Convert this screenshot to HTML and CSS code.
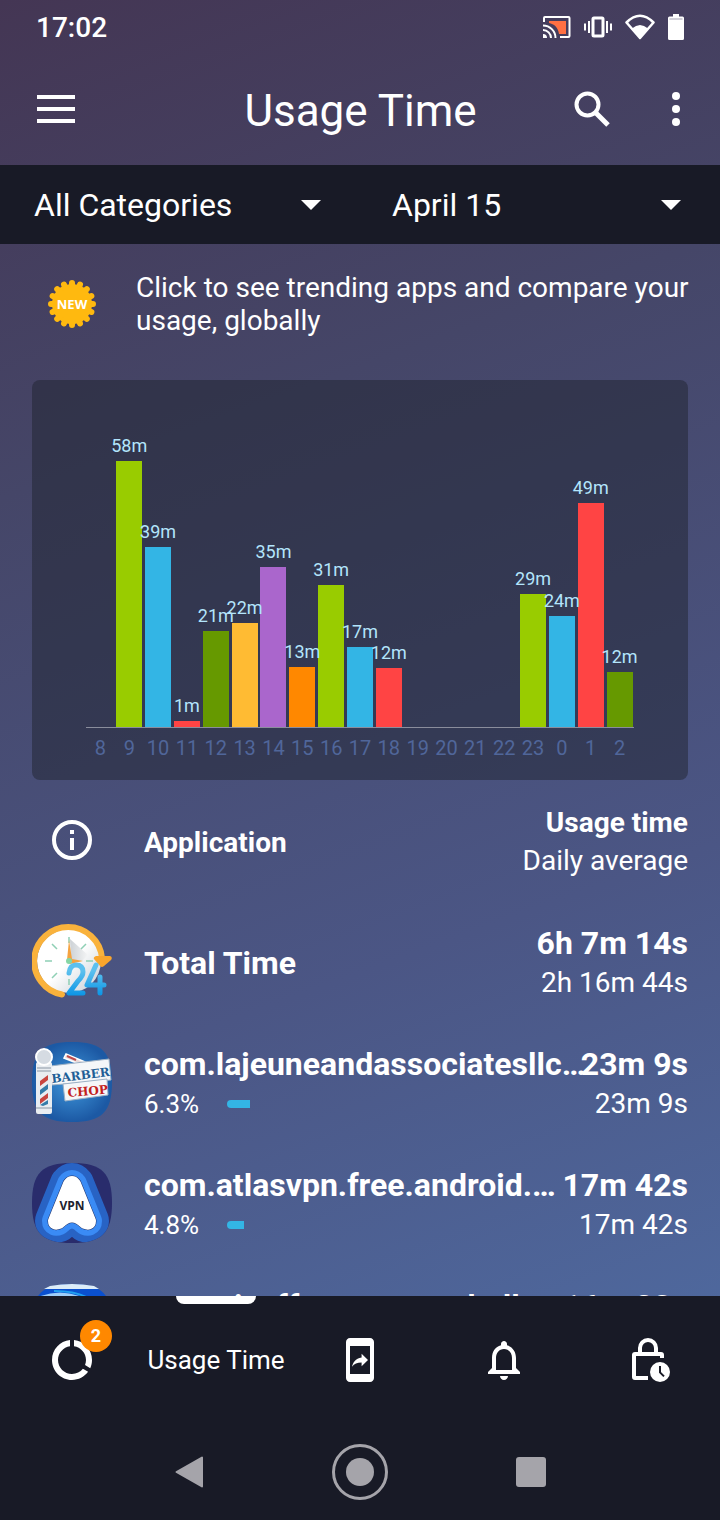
FILE: index.html
```html
<!DOCTYPE html>
<html lang="en">
<head>
    <meta charset="UTF-8">
    <meta name="viewport" content="width=device-width, initial-scale=1.0">
    <title>Usage Time</title>
    <link rel="stylesheet" href="styles.css">
</head>
<body>
    <div class="status-bar">
        <span class="clock">17:02</span>
        <div class="status-icons">
            <svg width="28" height="24" viewBox="0 0 28 24">
                <path d="M6 6h17v13h-7C15 12 11 9 6 8z" fill="#ff7043"/>
                <path d="M1 7V3q0-1 1-1h23.500q1 0 1 1v18q0 1-1 1H17" fill="none" stroke="#fff" stroke-width="2"/>
                <path d="M0 10.500a12.500 12.500 0 0 1 12.500 12.500M0 15a8 8 0 0 1 8 8" fill="none" stroke="#fff" stroke-width="2"/>
                <path d="M0 19a4 4 0 0 1 4 4H0z" fill="#fff"/>
            </svg>
            <svg width="28" height="24" viewBox="0 0 28 24">
                <rect x="9" y="3" width="10" height="18" rx="1" fill="none" stroke="#fff" stroke-width="3"/>
                <path d="M5 6v12M1 8.500v7M23 6v12M27 8.500v7" stroke="#fff" stroke-width="2"/>
            </svg>
            <svg width="30" height="26" viewBox="0 0 30 26">
                <path d="M1.500 8.500Q15-5 28.500 8.500L15 24z" fill="none" stroke="#fff" stroke-width="2.500" stroke-linejoin="round"/>
                <path d="M7 14.500Q15 7.500 23 14.500L15 24z" fill="#fff"/>
            </svg>
            <svg width="16" height="26" viewBox="0 0 16 26">
                <path d="M5 0h6v2.500h3.500q1.500 0 1.500 1.500v20.500q0 1.500-1.500 1.500h-13Q0 26 0 24.500V4q0-1.500 1.500-1.500H5z" fill="#fff"/>
                <path d="M1.500 5h13" stroke="#454060" stroke-width="0.500"/>
            </svg>
        </div>
    </div>

    <header>
        <button class="icon-btn" aria-label="Menu">
            <svg width="38" height="28" viewBox="0 0 38 28"><path d="M0 2h38M0 14h38M0 26h38" stroke="#fff" stroke-width="4"/></svg>
        </button>
        <h1>Usage Time</h1>
        <button class="icon-btn" aria-label="Search">
            <svg width="36" height="36" viewBox="0 0 36 36" fill="none" stroke="#fff"><circle cx="13.500" cy="13.500" r="11" stroke-width="4"/><path d="M22 22l12 12" stroke-width="5"/></svg>
        </button>
        <button class="icon-btn more" aria-label="More options">
            <svg width="8" height="34" viewBox="0 0 8 34" fill="#fff"><circle cx="4" cy="4" r="4"/><circle cx="4" cy="17" r="4"/><circle cx="4" cy="30" r="4"/></svg>
        </button>
    </header>

    <div class="filters">
        <div class="filter">
            <select aria-label="Category">
                <option>All Categories</option>
            </select>
        </div>
        <div class="filter">
            <select aria-label="Date">
                <option>April 15</option>
            </select>
        </div>
    </div>

    <main>
        <a href="#trending" class="promo">
            <svg class="new-badge" width="48" height="48" viewBox="-24 -24 48 48">
                <circle r="20" fill="#ffb90f"/>
                <g stroke="#ffb90f" stroke-width="6" stroke-linecap="round">
                    <path d="M-21 0H21M0-21V21M-14.800-14.800L14.800 14.800M-14.800 14.800L14.800-14.800M-19.400-8L19.400 8M-19.400 8L19.400-8M-8-19.400L8 19.400M8-19.400L-8 19.400"/>
                </g>
                <text x="0" y="5" text-anchor="middle" class="new-text">NEW</text>
            </svg>
            <span>Click to see trending apps and compare your usage, globally</span>
        </a>

        <section class="chart">
            <div class="bars" id="bars"></div>
            <div class="hours" id="hours"></div>
        </section>

        <div class="row list-head">
            <div class="row-icon">
                <svg width="40" height="40" viewBox="0 0 20 20"><circle cx="10" cy="10" r="9" fill="none" stroke="#fff" stroke-width="2"/><path d="M9 5h2v2H9zM9 9h2v6H9z" fill="#fff"/></svg>
            </div>
            <div class="row-body">
                <b class="name">Application</b>
            </div>
            <div class="totals"><b>Usage time</b><span>Daily average</span></div>
        </div>

        <div class="row">
            <div class="row-icon">
                <svg width="80" height="80" viewBox="0 0 80 80">
                    <defs>
                        <linearGradient id="face" x1="0" y1="0" x2="1" y2="1"><stop offset="0.500" stop-color="#fff"/><stop offset="1" stop-color="#c3cbd3"/></linearGradient>
                        <linearGradient id="shade" x1="0" y1="0" x2="1" y2="0"><stop offset="0" stop-color="#cdd2d6"/><stop offset="1" stop-color="#f4f5f6"/></linearGradient>
                        <linearGradient id="blue" x1="0" y1="50" x2="0" y2="74" gradientUnits="userSpaceOnUse"><stop offset="0" stop-color="#5cc0ee"/><stop offset="1" stop-color="#0d96e6"/></linearGradient>
                    </defs>
                    <circle cx="37" cy="40" r="32" fill="url(#face)"/>
                    <path d="M38 18L56 34 50 40 39 41z" fill="url(#shade)"/>
                    <path d="M30 73.500A34 34 0 1 1 70 37" fill="none" stroke="#f9b23c" stroke-width="6" stroke-linecap="round"/>
                    <path d="M64 35h14q3 1 1 4l-7 6q-2 2-4 0l-6-7q-1-2 2-3z" fill="#f9a52c"/>
                    <path d="M37 16v6M13 40h7M54 40h7M20 23l5 5M54 23l-5 5M20 57l5-5M37 58v6" stroke="#8fd0b5" stroke-width="1.500"/>
                    <path d="M35 39l2-20 3 19 11 2-13 3z" fill="#f5a340"/>
                    <circle cx="37" cy="40" r="3" fill="#86d6a5"/>
                    <g fill="none" stroke="url(#blue)" stroke-width="5" stroke-linecap="round" stroke-linejoin="round">
                        <path d="M37 52q1-8 7-8 7 0 7 7 0 4-5 9l-9 12h14"/>
                        <path d="M64 44L55 64h17M68 56v16"/>
                    </g>
                </svg>
            </div>
            <div class="row-body">
                <b class="name">Total Time</b>
            </div>
            <div class="totals"><b>6h 7m 14s</b><span>2h 16m 44s</span></div>
        </div>

        <div class="row">
            <div class="row-icon">
                <svg width="80" height="80" viewBox="0 0 80 80">
                    <defs><radialGradient id="barber"><stop offset="0" stop-color="#4099dd"/><stop offset="1" stop-color="#1c59a4"/></radialGradient></defs>
                    <path d="M40 0C70 0 80 10 80 40S70 80 40 80 0 70 0 40 10 0 40 0z" fill="url(#barber)"/>
                    <path d="M34 12l19 8-1 4-20-8z" fill="#e8d9d8" stroke="#fff" stroke-width="1.500"/>
                    <path d="M35 14l9 4" stroke="#bf4a4a" stroke-width="2"/>
                    <path d="M18 24L77 17 79 38 20 43z" fill="#f5f7f9" stroke="#9db1c5"/>
                    <path d="M31 42L75 37 76 53 33 59z" fill="#f5f7f9" stroke="#9db1c5"/>
                    <text class="sign sign-blue" x="20" y="41" transform="rotate(-7 20 41)">BARBER</text>
                    <text class="sign sign-red" x="36" y="55" transform="rotate(-5 36 55)">CHOP</text>
                    <rect x="4" y="20" width="16" height="52" rx="2" fill="#e9edf1"/>
                    <circle cx="12" cy="15" r="8" fill="#d5dbe2" stroke="#fff" stroke-width="2"/>
                    <path d="M8 39l8-6v5l-8 6zM8 57l8-6v5l-8 6z" fill="#c8453f"/>
                    <path d="M8 48l8-6v5l-8 6zM8 63l8-5v4l-5 2z" fill="#347ca9"/>
                    <path d="M5 26h14M5 29h14M4 66h16" stroke="#aab4bf" stroke-width="1.500"/>
                </svg>
            </div>
            <div class="row-body">
                <b class="name">com.lajeuneandassociatesllc.barberchop</b>
                <div class="share"><span>6.3%</span><div class="track"><div class="fill" style="width: 6.3%"></div></div></div>
            </div>
            <div class="totals"><b>23m 9s</b><span>23m 9s</span></div>
        </div>

        <div class="row">
            <div class="row-icon">
                <svg width="80" height="80" viewBox="0 0 80 80">
                    <clipPath id="squircle"><path d="M40 0C70 0 80 10 80 40S70 80 40 80 0 70 0 40 10 0 40 0z"/></clipPath>
                    <g clip-path="url(#squircle)" stroke-linejoin="round">
                        <rect width="80" height="80" fill="#292c6c"/>
                        <path d="M37 21q3-4 6 0L58 58q0 4-5 2-13-13-26 0-5 2-5-2z" fill="#2863c4" stroke="#2863c4" stroke-width="38"/>
                        <path d="M37 21q3-4 6 0L58 58q0 4-5 2-13-13-26 0-5 2-5-2z" stroke="#3a8bf5" stroke-width="24"/>
                        <path d="M37 21q3-4 6 0L58 58q0 4-5 2-13-13-26 0-5 2-5-2z" fill="#fff" stroke="#20336c" stroke-width="13"/>
                        <path d="M37 21q3-4 6 0L58 58q0 4-5 2-13-13-26 0-5 2-5-2z" fill="#fff" stroke="#fff" stroke-width="12"/>
                        <text x="40" y="47" text-anchor="middle" class="vpn">VPN</text>
                    </g>
                </svg>
            </div>
            <div class="row-body">
                <b class="name">com.atlasvpn.free.android.proxy.secure</b>
                <div class="share"><span>4.8%</span><div class="track"><div class="fill" style="width: 4.8%"></div></div></div>
            </div>
            <div class="totals"><b>17m 42s</b><span>17m 42s</span></div>
        </div>

        <div class="row">
            <div class="row-icon">
                <svg width="80" height="80" viewBox="0 0 80 80">
                    <path d="M40 0C70 0 80 10 80 40S70 80 40 80 0 70 0 40 10 0 40 0z" fill="#0a50cf"/>
                    <path d="M18 2Q40-2 62 2L67 5H12z" fill="#dcecf8"/>
                    <path d="M6 13Q28 4 50 13z" fill="#9ecdf8"/>
                    <path d="M22 7Q44 7 56 14" fill="none" stroke="#20a0f0" stroke-width="2"/>
                </svg>
            </div>
            <div class="row-body">
                <b class="name">com.gixoff.racegamesball.extreme</b>
                <div class="share"><span>4.4%</span><div class="track"><div class="fill" style="width: 4.4%"></div></div></div>
            </div>
            <div class="totals"><b>16m 23s</b><span>16m 23s</span></div>
        </div>
    </main>

    <nav class="tabs">
        <a href="#overview" aria-label="Overview">
            <span class="tab-icon">
                <svg width="48" height="48" viewBox="0 0 24 24" fill="#fff"><path d="M13 2.050v3.030c3.390.490 6 3.390 6 6.920 0 .900-.180 1.750-.480 2.540l2.600 1.530c.560-1.240.880-2.620.880-4.070 0-5.180-3.950-9.450-9-9.950zM12 19c-3.870 0-7-3.130-7-7 0-3.530 2.610-6.430 6-6.920V2.050c-5.060.500-9 4.760-9 9.950 0 5.520 4.470 10 9.990 10 3.310 0 6.240-1.610 8.060-4.090l-2.600-1.530C16.170 17.980 14.210 19 12 19z"/></svg>
                <span class="badge">2</span>
            </span>
        </a>
        <a href="#usage" class="active">Usage Time</a>
        <a href="#share" aria-label="Share">
            <svg width="48" height="48" viewBox="0 0 24 24" fill="#fff"><path d="M17 1H7c-1.100 0-2 .900-2 2v18c0 1.100.900 2 2 2h10c1.100 0 2-.900 2-2V3c0-1.100-.900-2-2-2zm0 18H7V5h10v14z"/><path d="M12.800 13.240V15.100L16 12l-3.200-3.100v1.800c-3.100.430-4.350 2.560-4.800 4.690 1.110-1.500 2.580-2.150 4.800-2.150z"/></svg>
        </a>
        <a href="#alerts" aria-label="Alerts">
            <svg width="48" height="48" viewBox="0 0 24 24" fill="#fff"><path d="M12 22c1.100 0 2-.900 2-2h-4c0 1.100.900 2 2 2zm6-6v-5c0-3.070-1.630-5.640-4.500-6.320V4c0-.830-.670-1.500-1.500-1.500s-1.500.670-1.500 1.500v.680C7.640 5.360 6 7.920 6 11v5l-2 2v1h16v-1l-2-2zm-2 1H8v-6c0-2.480 1.510-4.500 4-4.500s4 2.020 4 4.500v6z"/></svg>
        </a>
        <a href="#limits" aria-label="App limits">
            <svg width="48" height="48" viewBox="0 0 24 24" fill="none" stroke="#fff" stroke-width="2"><path d="M19 11V9.500Q19 9 18.500 9h-13Q5 9 5 9.500v11q0 .500.500.500H12M8 8V6a4 4 0 0 1 8 0v2"/><circle cx="18" cy="18" r="5" fill="#fff" stroke="none"/><path d="M18 15v3.200l2 2" stroke="#181a26" stroke-width="1"/></svg>
        </a>
    </nav>

    <div class="system-nav">
        <button aria-label="Back"><svg width="30" height="32" viewBox="0 0 30 32"><path d="M28 1.500v29L2.500 16z" fill="#a5a4aa" stroke="#a5a4aa" stroke-width="2" stroke-linejoin="round"/></svg></button>
        <button aria-label="Home"><svg width="56" height="56" viewBox="0 0 56 56"><circle cx="28" cy="28" r="26.500" fill="none" stroke="#a5a4aa" stroke-width="3"/><circle cx="28" cy="28" r="14" fill="#a5a4aa"/></svg></button>
        <button aria-label="Recent apps"><svg width="30" height="30" viewBox="0 0 30 30"><rect width="30" height="30" rx="3" fill="#a5a4aa"/></svg></button>
    </div>

    <script>
        // minutes of use in each hour
        const usage = [
            { hour: 8, min: 0 },
            { hour: 9, min: 58.4, color: '#99cc00' },
            { hour: 10, min: 39.6, color: '#33b5e5' },
            { hour: 11, min: 1.3, color: '#ff4444' },
            { hour: 12, min: 21.2, color: '#669900' },
            { hour: 13, min: 22.9, color: '#ffbb33' },
            { hour: 14, min: 35.2, color: '#aa66cc' },
            { hour: 15, min: 13.2, color: '#ff8800' },
            { hour: 16, min: 31.2, color: '#99cc00' },
            { hour: 17, min: 17.6, color: '#33b5e5' },
            { hour: 18, min: 12.9, color: '#ff4444' },
            { hour: 19, min: 0 },
            { hour: 20, min: 0 },
            { hour: 21, min: 0 },
            { hour: 22, min: 0 },
            { hour: 23, min: 29.3, color: '#99cc00' },
            { hour: 0, min: 24.3, color: '#33b5e5' },
            { hour: 1, min: 49.3, color: '#ff4444' },
            { hour: 2, min: 12.2, color: '#669900' }
        ];

        const bars = document.getElementById('bars');
        const hours = document.getElementById('hours');

        usage.forEach(item => {
            const slot = document.createElement('div');
            slot.className = 'slot';
            if (item.min > 0) {
                slot.innerHTML = `<span class="value">${Math.floor(item.min)}m</span>
                    <div class="bar" style="height: ${item.min / 60 * 100}%; background: ${item.color}"></div>`;
            }
            bars.appendChild(slot);

            const label = document.createElement('span');
            label.textContent = item.hour;
            hours.appendChild(label);
        });
    </script>
</body>
</html>
```
FILE: styles.css
```css
* {
    box-sizing: border-box;
}

body {
    font-family: Roboto, "Liberation Sans", sans-serif;
    margin: 0;
    height: 100vh;
    display: flex;
    flex-direction: column;
    overflow: hidden;
    color: #fff;
    background: linear-gradient(160deg, #443654 0%, #454668 28%, #4b5685 62%, #5070a8 100%);
}

svg {
    display: block;
    flex-shrink: 0;
}

button {
    border: none;
    background: none;
    padding: 0;
    cursor: pointer;
}

a {
    color: #fff;
    text-decoration: none;
}

/* Top of the screen */
.status-bar {
    height: 52px;
    padding: 2px 36px 0;
    display: flex;
    justify-content: space-between;
    align-items: center;
}

.clock {
    font-size: 28px;
    font-weight: 500;
}

.status-icons {
    display: flex;
    align-items: center;
    gap: 13px;
}

header {
    height: 113px;
    padding: 0 40px 0 37px;
    display: flex;
    align-items: center;
}

h1 {
    flex: 1;
    margin: 0;
    padding: 4px 0 0 72px;
    text-align: center;
    font-size: 44px;
    font-weight: 400;
}

.more {
    margin-left: 62px;
}

.filters {
    display: grid;
    grid-template-columns: 1fr 1fr;
    height: 79px;
    background: #181a26;
}

.filter {
    position: relative;
    padding: 0 40px 0 32px;
    display: flex;
}

.filter:first-child {
    padding-left: 34px;
}

.filter::after {
    content: "";
    position: absolute;
    right: 39px;
    top: 35px;
    border: 10px solid transparent;
    border-top-color: #fff;
    border-bottom: none;
    pointer-events: none;
}

select {
    appearance: none;
    flex: 1;
    border: none;
    padding: 0;
    background: none;
    color: #fff;
    font-family: inherit;
    font-size: 32px;
}

/* Content */
main {
    flex: 1;
    min-height: 0;
    overflow: hidden;
}

.promo {
    display: flex;
    align-items: center;
    gap: 40px;
    height: 136px;
    padding: 0 28px 16px 48px;
    font-size: 28px;
    line-height: 33px;
}

.new-text {
    font: 700 13px "Open Sans", sans-serif;
    fill: #fff;
}

.chart {
    margin: 0 32px;
    padding: 74px 54px 20px;
    border-radius: 8px;
    background: rgba(32, 36, 48, 0.5);
}

.bars {
    display: grid;
    grid-template-columns: repeat(19, 1fr);
    height: 274px;
    border-bottom: 1px solid #8a8d9c;
}

.slot {
    display: flex;
    flex-direction: column;
    justify-content: flex-end;
    align-items: center;
    min-width: 0;
    height: 100%;
}

.bar {
    width: 26px;
    flex-shrink: 0;
}

.value {
    position: relative;
    z-index: 1;
    margin-bottom: 4px;
    font-size: 18px;
    line-height: 22px;
    color: #b3e5fc;
}

.hours {
    display: grid;
    grid-template-columns: repeat(19, 1fr);
    margin-top: 8px;
    font-size: 20px;
    line-height: 24px;
    text-align: center;
    color: #50669a;
}

.row {
    display: flex;
    align-items: center;
    height: 121px;
    padding: 0 32px;
}

.row-icon {
    display: flex;
    justify-content: center;
    width: 80px;
    margin-right: 32px;
    flex-shrink: 0;
}

.row-body {
    flex: 1;
    min-width: 0;
    margin-right: -6px;
    padding-top: 5px;
}

.name {
    display: block;
    overflow: hidden;
    text-overflow: ellipsis;
    white-space: nowrap;
}

.row b {
    font-size: 32px;
    line-height: 40px;
}

.share {
    display: flex;
    align-items: center;
    gap: 28px;
    font-size: 26px;
    line-height: 40px;
}

.track {
    flex: 1;
}

.fill {
    height: 8px;
    border-radius: 4px 0 0 4px;
    background: #33b5e5;
}

.totals {
    padding-top: 5px;
    text-align: right;
    white-space: nowrap;
}

.totals b,
.totals span {
    display: block;
}

.totals span {
    font-size: 28px;
    line-height: 40px;
}

.list-head {
    height: 120px;
}

.list-head b {
    font-size: 28px;
    line-height: 36px;
}

.sign {
    font-family: "DejaVu Serif", serif;
    font-weight: 700;
}

.sign-blue {
    font-size: 12px;
    fill: #1f5f96;
}

.sign-red {
    font-size: 12px;
    fill: #c2211c;
}

.vpn {
    font: 700 12px "Open Sans", sans-serif;
    fill: #20222e;
}

/* Bottom navigation */
.tabs {
    display: grid;
    grid-template-columns: repeat(5, 1fr);
    height: 128px;
    background: #181a26;
}

.tabs a {
    position: relative;
    display: flex;
    justify-content: center;
    align-items: center;
    font-size: 26px;
}

.active::before {
    content: "";
    position: absolute;
    top: 0;
    width: 80px;
    height: 8px;
    border-radius: 0 0 8px 8px;
    background: #fff;
}

.tab-icon {
    position: relative;
}

.badge {
    position: absolute;
    top: -16px;
    right: -16px;
    width: 32px;
    height: 32px;
    border-radius: 50%;
    background: #ff8800;
    font-size: 18px;
    font-weight: 700;
    line-height: 32px;
    text-align: center;
}

.system-nav {
    display: flex;
    justify-content: center;
    align-items: center;
    gap: 128px;
    height: 96px;
    background: #181a26;
}
```
